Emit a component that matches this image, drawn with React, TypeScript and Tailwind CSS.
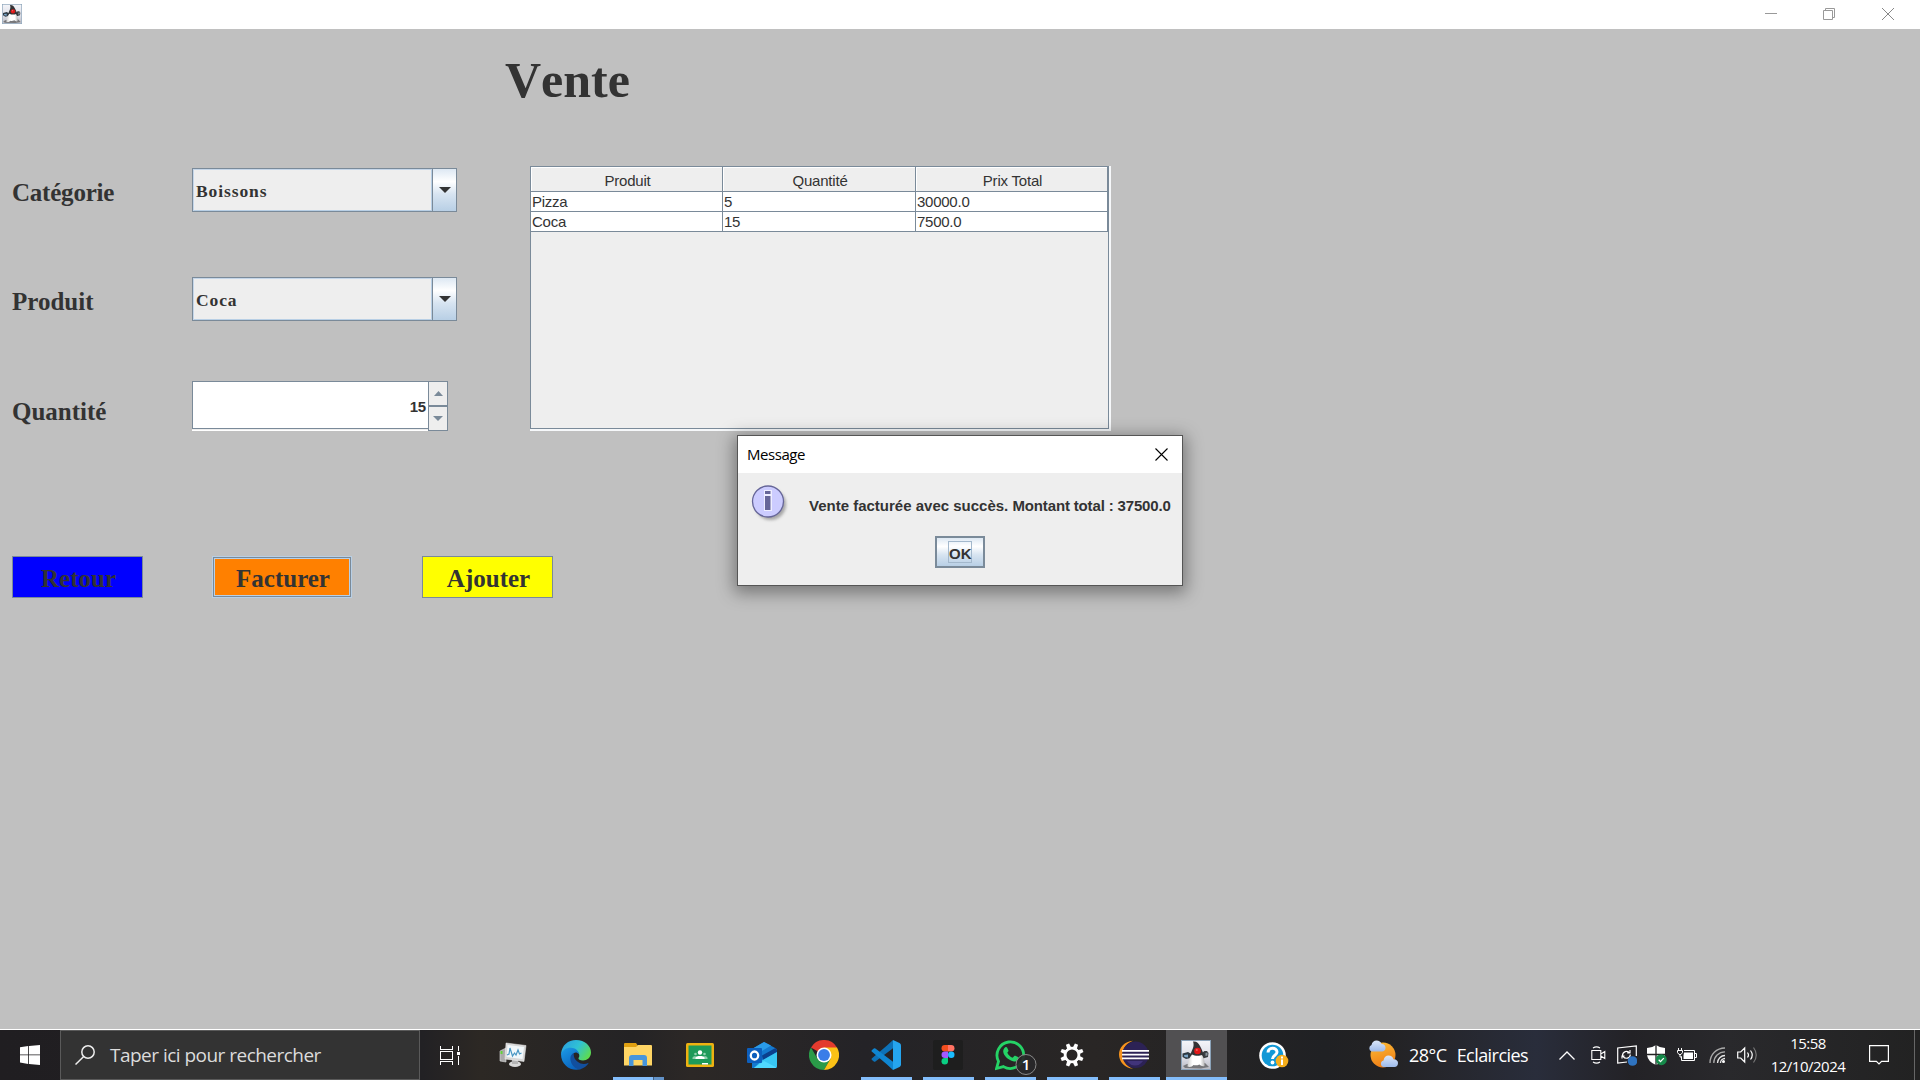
import type { ReactNode } from "react";

const SERIF = "font-['Liberation_Serif',serif]";
const SANS = "font-['Liberation_Sans',sans-serif]";
const UI = "font-['Open_Sans',sans-serif]";

function DukeIcon({ className }: { className: string }) {
  return (
    <svg viewBox="0 0 30 30" preserveAspectRatio="none" className={className}>
      <defs>
        <linearGradient id="dukeBg" x1="0" y1="0" x2="0" y2="1">
          <stop offset="0" stopColor="#f4f5f9" />
          <stop offset="0.6" stopColor="#dcdde6" />
          <stop offset="1" stopColor="#b9bac2" />
        </linearGradient>
        <linearGradient id="dukeBody" x1="0" y1="0" x2="1" y2="0">
          <stop offset="0" stopColor="#cfcfcf" />
          <stop offset="0.3" stopColor="#ffffff" />
          <stop offset="0.75" stopColor="#ffffff" />
          <stop offset="1" stopColor="#b5b5b5" />
        </linearGradient>
      </defs>
      <rect x="0.5" y="0.5" width="29" height="29" fill="url(#dukeBg)" stroke="#8ba3b9" />
      <path d="M6 24 L24 23 L28 27 L20 28.5 L4 28 L2 26 Z" fill="#77777a" />
      <path d="M1.5 13.500 L7 12 L10.500 14 L10 18 L5 19 L1.500 17 Z" fill="#2e3a44" />
      <path d="M3 15 L7 14.500 L7 17.500 L3.500 17 Z" fill="#7ba5c8" />
      <path d="M20 13.500 L23.500 11 L26 11 L27.500 13 L27 17 L22 18.500 Z" fill="#3a3e42" />
      <path d="M24.500 13 L26.500 12.500 L26.500 15.500 L24.500 16 Z" fill="#8a959d" />
      <path d="M12 1.500 C15.500 1 17.500 3 19 6 C21 9.500 22.500 13 23 18 L9 18 C9 13 12 9.500 12.500 6 C12.700 4 12.500 3 12 1.500 Z" fill="#333335" />
      <path d="M11 14.500 C13.500 16 18.500 16.200 21 15 C22.800 17.500 24 21.500 23.500 26 C21.500 26.500 20 26 18.500 24.500 C16 25.500 14 25.500 12.500 25 C11 27 8.500 27.500 6.500 26.500 C6.500 21.500 8.500 17.500 11 14.500 Z" fill="url(#dukeBody)" />
      <circle cx="16.500" cy="11" r="3.300" fill="#e01818" />
      <circle cx="15.800" cy="10" r="1" fill="#f46060" />
    </svg>
  );
}

function TitleBar() {
  return (
    <header className="flex h-[29px] items-center justify-between bg-white">
      <DukeIcon className="-mt-px ml-[2px] h-5 w-5" />
      <div className="flex items-center pr-[26px]">
        <svg viewBox="0 0 12 12" className="-mt-px h-3 w-3"><path d="M0 5.500h12" stroke="#999" /></svg>
        <svg viewBox="0 0 12 12" className="-mt-px ml-[46px] h-3 w-3" fill="none" stroke="#999">
          <path d="M.5 2.500h9v9h-9zM2.500 2.500v-2h9v9h-2" />
        </svg>
        <svg viewBox="0 0 12 12" className="-mt-px ml-[47px] h-3 w-3" stroke="#888"><path d="M0 0l12 12M12 0L0 12" /></svg>
      </div>
    </header>
  );
}

function ComboBox({ value }: { value: string }) {
  return (
    <div className="flex h-[44px] w-[265px] border border-[#7a8a99] bg-[#eee]">
      <div className="h-[42px] w-[239px] border-t border-l border-[#c5d6e9] bg-[#eee]">
        <div className={`${SERIF} h-[41px] border-r border-b border-[#b8cfe5] pt-[10px] pl-[2px] text-[17.500px] leading-[22px] font-bold tracking-[0.900px] text-[#333]`}>
          {value}
        </div>
      </div>
      <div className="flex flex-1 items-center justify-center border-l border-[#7a8a99] bg-[linear-gradient(180deg,#dde8f3_0%,#ffffff_30%,#d7e4f1_60%,#b8cfe5_100%)]">
        <svg viewBox="0 0 12 6" className="h-[6px] w-3"><path d="M0 0h12L6 6z" fill="#333" /></svg>
      </div>
    </div>
  );
}

function Spinner() {
  return (
    <div className="flex h-[50px] w-[256px]">
      <div className="h-[50px] w-[236px] border-b border-white">
        <div className={`${SANS} h-[48px] border-t border-b border-l border-[#7a8a99] bg-white pt-[16px] pr-[2px] text-right text-[15px] leading-[18px] font-bold tracking-[-0.200px] text-[#333]`}>
          15
        </div>
        <div className="h-px bg-[#eee]" />
      </div>
      <div className="flex w-5 flex-col border border-[#7a8a99] bg-[#eee]">
        <div className="flex h-[25px] items-center justify-center border-b-2 border-[#7a8a99]">
          <svg viewBox="0 0 9 5" className="h-[5px] w-[9px]"><path d="M0 5h9L4.500 0z" fill="#7a8a99" /></svg>
        </div>
        <div className="flex h-[23px] items-center justify-center">
          <svg viewBox="0 0 10 5" className="h-[5px] w-[10px]"><path d="M0 0h10L5 5z" fill="#7a8a99" /></svg>
        </div>
      </div>
    </div>
  );
}

function Field({ label, pad, children }: { label: string; pad: string; children: ReactNode }) {
  return (
    <div className="flex">
      <span className={`${SERIF} ${pad} w-[192px] pl-3 text-[25px] leading-[30px] font-bold text-[#333]`}>{label}</span>
      {children}
    </div>
  );
}

function SalesTable() {
  const heads = ["Produit", "Quantité", "Prix Total"];
  const rows = [
    ["Pizza", "5", "30000.0"],
    ["Coca", "15", "7500.0"],
  ];
  const grid = "grid grid-cols-[192px_193px_192px]";
  return (
    <div className="h-[265px] w-[581px] border-r-2 border-b-2 border-[#f6f8fa]">
      <div className={`${SANS} h-[263px] border border-[#7a8a99] bg-[#eee] text-[15px] text-[#333]`}>
        <div className={`${grid} h-[25px]`}>
          {heads.map((h) => (
            <div key={h} className="flex justify-center border-r border-b border-[#7a8a99] pt-[5px] pl-[2px] leading-[18px] tracking-[-0.200px] shadow-[inset_1px_1px_0_#fff]">
              {h}
            </div>
          ))}
        </div>
        {rows.map((r) => (
          <div key={r[0]} className={`${grid} h-5 bg-white`}>
            {r.map((c) => (
              <div key={c} className="border-r border-b border-[#7a8a99] pl-[1px] leading-[19px] tracking-[-0.250px]">{c}</div>
            ))}
          </div>
        ))}
      </div>
    </div>
  );
}

function MessageDialog() {
  return (
    <section className="absolute top-[435px] left-[737px] h-[151px] w-[446px] border border-[#555] bg-[#eee] shadow-[0_4px_16px_3px_rgba(0,0,0,0.38)]">
      <div className="flex h-[37px] items-center justify-between bg-white pr-[14px] pl-[9px]">
        <span className={`${UI} -mt-[2px] text-[15px] leading-5 tracking-[-0.450px] text-black`}>Message</span>
        <svg viewBox="0 0 13 13" className="-mt-px h-[13px] w-[13px]" stroke="#000" strokeWidth="1.100"><path d="M.5.5l12 12M12.500.5l-12 12" /></svg>
      </div>
      <div className="flex h-[52px] pl-[13px]">
        <svg viewBox="0 0 40 42" className="mt-[10px] h-[42px] w-[40px]">
          <defs><filter id="soft" x="-30%" y="-30%" width="160%" height="160%"><feGaussianBlur stdDeviation="1.500" /></filter></defs>
          <circle cx="19.500" cy="21.500" r="15.500" fill="#888" opacity=".7" filter="url(#soft)" />
          <circle cx="17" cy="18.500" r="15.500" fill="#ccf" stroke="#669" strokeWidth="1.300" />
          <path d="M13 7h8v21h-8z" fill="#eef" />
          <path d="M14 8h5.500v3h-5.500zM14 13h5.500v14h-5.500z" fill="#669" />
        </svg>
        <span className={`${SANS} mt-[24px] ml-[18px] text-[15px] leading-[18px] font-bold whitespace-nowrap text-[#333]`}>
          Vente facturée avec succès. <span className="tracking-[-0.150px]">Montant total : 37500.0</span>
        </span>
      </div>
      <button className={`${SANS} mt-[11px] ml-[197px] flex h-8 w-[50px] items-center justify-center border-2 border-[#7a8a99] bg-[linear-gradient(180deg,#dde8f3_0%,#ffffff_30%,#d7e4f1_60%,#b8cfe5_100%)]`}>
        <span className="h-[22px] w-6 border border-[#a3b8cc] pt-[3px] text-center text-[15px] leading-[18px] font-bold text-[#333]">OK</span>
      </button>
    </section>
  );
}

const EdgeIcon = () => (
  <svg viewBox="0 0 30 30" className="h-[30px] w-[30px]">
    <defs>
      <linearGradient id="edgeTop" x1="0" y1="0.2" x2="1" y2="0.7"><stop offset="0" stopColor="#2a9fe0" /><stop offset="0.5" stopColor="#30c2d4" /><stop offset="1" stopColor="#5fdc4a" /></linearGradient>
      <linearGradient id="edgeLow" x1="0" y1="0" x2="0.6" y2="1"><stop offset="0" stopColor="#1c9be6" /><stop offset="1" stopColor="#0a62bd" /></linearGradient>
    </defs>
    <path d="M0 14C1 5 7 0 15 0c9 0 15 6 15 12.500 0 5-4 8-8 8-3 0-5-1-4.500-2.500 1-1.500 1-2 .5-4C16.500 10 10 7 0 14z" fill="url(#edgeTop)" />
    <path d="M0 14C2 9.500 6 7.500 10 7.800c4 .2 7.500 2.500 8 6.200-1.500-1.500-3.500-2-5-1-4.500 3-1 12 7 16-9 3-20-3-20-15z" fill="url(#edgeLow)" />
    <path d="M13 13c-3 1-4 4-3.500 7C10.500 26 16 30.500 20 29c3-.8 6-3 7.800-6.200-4 1.800-8 1.500-10.800-.8-3-2.300-5-5-4-9z" fill="#124f9e" />
  </svg>
);

const ExplorerIcon = () => (
  <svg viewBox="0 0 28 24" className="h-6 w-7">
    <path d="M0 1a1 1 0 011-1h11l2 3-2 2H0z" fill="#e0a011" />
    <path d="M0 4h12l2-2h13a1 1 0 011 1v19.500H0z" fill="#fed565" />
    <path d="M5 23v-8a3 3 0 013-3h12a3 3 0 013 3v8h-4.500v-6h-9v6z" fill="#4795dc" />
  </svg>
);

const ClassroomIcon = () => (
  <svg viewBox="0 0 28 24" className="h-6 w-7">
    <rect width="28" height="24" rx="1.500" fill="#eeb211" />
    <rect x="2.500" y="2.500" width="23" height="19" fill="#1d9a59" />
    <circle cx="14" cy="9.500" r="2.200" fill="#fff" />
    <circle cx="9.500" cy="11" r="1.300" fill="#8fd0ae" />
    <circle cx="18.500" cy="11" r="1.300" fill="#8fd0ae" />
    <path d="M6.500 16v-1c0-2 3.500-2 5-1 1-1 4-1 5 0 1.500-1 5-1 5 1v1z" fill="#8fd0ae" />
    <path d="M9.500 16v-1c0-2.600 9-2.600 9 0v1z" fill="#fff" />
    <path d="M16 20h6v1.500h-6z" fill="#fff" />
  </svg>
);

const OutlookIcon = () => (
  <svg viewBox="0 0 30 26" className="h-[26px] w-[30px]">
    <path d="M5 7 L17 0 L29 6.500 L30 8 V24 Q30 26 28 26 H5 Z" fill="#1479cf" />
    <path d="M5 7 L17 0 L24 3.500 L10 12 L5 10 Z" fill="#2a9be8" />
    <path d="M15 13.500 L28.500 6 L30 8 V10 L16 18 Z" fill="#0b3f8d" />
    <path d="M15 18.500 L30 10 V24 Q30 26 28 26 H7 Z" fill="#38c6f4" />
    <path d="M7 26 L17 19 L29.500 25.500 L28 26 Z" fill="#50d9ff" />
    <rect y="6" width="15" height="15" rx="1" fill="#0d5fbd" />
    <ellipse cx="7.500" cy="13.500" rx="3.700" ry="4" fill="none" stroke="#fff" strokeWidth="2.300" />
  </svg>
);

const ChromeIcon = () => (
  <svg viewBox="0 0 48 48" className="h-[30px] w-[30px]">
    <path d="M24 24L3.200 12A24 24 0 0144.800 12z" fill="#e33b2e" />
    <path d="M3.200 12A24 24 0 0024 48l10.400-18H13.600z" fill="#2a9a48" />
    <path d="M24 12h20.800A24 24 0 0124 48l10.400-18z" fill="#fbc116" />
    <circle cx="24" cy="24" r="12" fill="#fff" />
    <circle cx="24" cy="24" r="9.500" fill="#3a7de8" />
  </svg>
);

const TaskManagerIcon = () => (
  <svg viewBox="0 0 28 26" className="mr-[2px] h-[26px] w-7">
    <path d="M1 9l6-3v14l-6-1z" fill="#aaa" stroke="#ddd" strokeWidth=".6" />
    <path d="M1.500 9h2v3h-2z" fill="#62d33a" />
    <ellipse cx="16" cy="22" rx="6" ry="3" fill="#d9d9d9" />
    <path d="M13 18h6v4h-6z" fill="#b5b5b5" />
    <path d="M7 1l20 2.500-2 16L6 17z" fill="#d7d7d7" stroke="#f1f1f1" strokeWidth=".5" />
    <path d="M8.500 3L25 5l-1.500 12L7.500 15z" fill="#f2f8fb" />
    <path d="M8 13l2-1 1-6 2.500 8 2-3 1.500 2 2-5 1.500 4 2-1" fill="none" stroke="#4997c4" strokeWidth="1.200" />
  </svg>
);

const VsCodeIcon = () => (
  <svg viewBox="0 0 30 30" className="h-[30px] w-[30px]">
    <path d="M22 0l-6 5.500L1 18.200a1.200 1.200 0 000 1.800L2.800 21.500a1.300 1.300 0 001.600 0L22 8.200z" fill="#0d72b8" />
    <path d="M22 30l-6-5.500L1 11.800A1.200 1.200 0 011 10l1.800-1.500a1.300 1.300 0 011.600 0L22 21.800z" fill="#0f86d2" />
    <path d="M22 0l6.500 3q1.500.8 1.500 2.500v19q0 1.700-1.500 2.500L22 30z" fill="#25a5ef" />
  </svg>
);

const FigmaIcon = () => (
  <svg viewBox="0 0 30 30" className="h-[30px] w-[30px]">
    <rect width="30" height="30" rx="2" fill="#1e1e1e" />
    <path d="M15 5h-3.200a3.250 3.250 0 000 6.500H15z" fill="#f24e1e" />
    <path d="M15 5h3.200a3.250 3.250 0 010 6.500H15z" fill="#ff7262" />
    <path d="M15 11.500h-3.200a3.250 3.250 0 000 6.500H15z" fill="#a259ff" />
    <circle cx="18.250" cy="14.750" r="3.250" fill="#1abcfe" />
    <path d="M11.750 18H15v3.250A3.250 3.250 0 1111.750 18z" fill="#0acf83" />
  </svg>
);

const WhatsAppIcon = () => (
  <svg viewBox="0 0 42 36" className="mt-[5px] ml-[12px] h-9 w-[42px]">
    <path d="M1.500 28.500l2-7.200A13.300 13.300 0 118.500 26.600z" fill="none" stroke="#25d366" strokeWidth="2.800" />
    <path d="M10 7.500c1-.7 1.700-.6 2.200.3l1.300 2.800c.2.700-.8 1.700-1.200 2.200 1.200 2.400 3 4 5.300 5l1.700-1.900c.5-.5 1-.2 1.500 0l2.700 1.400c.7.500.2 2.200-.5 3-1.300 1.300-3 1.500-5 .9-5.500-1.700-9.500-6-9.800-9.800 0-1.600.7-3 1.800-3.900z" fill="#25d366" />
    <circle cx="31" cy="24.500" r="10" fill="#29282a" fillOpacity=".93" stroke="#888" strokeWidth="1" />
    <text x="31" y="30" textAnchor="middle" fontFamily="Open Sans, sans-serif" fontSize="15" fontWeight="600" fill="#fff">1</text>
  </svg>
);

const GearIcon = () => (
  <svg viewBox="0 0 24 24" className="h-6 w-6">
    <circle cx="12" cy="12" r="6.900" fill="none" stroke="#fff" strokeWidth="2.800" />
    {[22.5, 67.5, 112.5, 157.5, 202.5, 247.5, 292.5, 337.5].map((a) => (
      <path key={a} d="M9.800 5L10.300.3h3.400L14.200 5z" fill="#fff" transform={`rotate(${a} 12 12)`} />
    ))}
  </svg>
);

const EclipseIcon = () => (
  <svg viewBox="0 0 30 30" className="h-[30px] w-[30px]">
    <path d="M14 .8C5.500 1.500 0 7.500 0 14.500S5.500 28 14 28.700C8 26.500 3.500 21 3.500 14.500S8 3 14 .8z" fill="#f7941e" />
    <circle cx="16.500" cy="14.800" r="13.200" fill="#2c2255" />
    <path d="M8 21h16a9.500 9.500 0 01-16 0z" fill="#41347a" />
    <path d="M3 10.800h27M3 14.600h27M3 18.400h27" stroke="#fff" strokeWidth="1.700" />
  </svg>
);

const HelpIcon = () => (
  <svg viewBox="0 0 30 28" className="h-7 w-[30px]">
    <circle cx="13.500" cy="13.500" r="13.300" fill="#fff" />
    <circle cx="13.500" cy="13.500" r="10.800" fill="#1198d6" />
    <path d="M9 10.500c0-5.500 9-5.500 9-.5 0 3.500-4.500 3-4.500 7" fill="none" stroke="#fff" strokeWidth="3" />
    <circle cx="13.500" cy="20.500" r="1.900" fill="#fff" />
    <circle cx="23" cy="19" r="6.300" fill="#f5ae1c" />
    <path d="M22 17.500h2v5.500h-2zM22 14.500h2v2h-2z" fill="#fff" />
  </svg>
);

const WeatherIcon = () => (
  <svg viewBox="0 0 30 30" className="-ml-px h-[30px] w-[30px]">
    <defs>
      <linearGradient id="sun" x1="0.200" y1="0" x2="0.500" y2="1"><stop offset="0" stopColor="#fcbb36" /><stop offset="1" stopColor="#ef7d16" /></linearGradient>
      <linearGradient id="cloud" x1="0" y1="0" x2="0" y2="1"><stop offset="0" stopColor="#dbe7fa" /><stop offset="1" stopColor="#9dbaea" /></linearGradient>
    </defs>
    <circle cx="15" cy="15" r="12.500" fill="url(#sun)" />
    <path d="M3.500 11.500a3.500 3.500 0 010-6.500C4 2 6 .5 8.500.5S13 2 13.500 4c3 0 4 2 4 3.800 0 2.500-1.500 3.700-3.500 3.700z" fill="url(#cloud)" />
    <path d="M16 27a3.300 3.300 0 01-.5-6.500c.5-3.500 2.500-5 5-5s4.500 1.500 5 3.800c3 0 4.500 1.800 4.500 3.800 0 2.600-1.500 3.900-3.500 3.900z" fill="url(#cloud)" />
  </svg>
);

type App = { name: string; icon: ReactNode; open?: boolean; active?: boolean; stacked?: boolean };

const apps: App[] = [
  { name: "task-manager", icon: <TaskManagerIcon /> },
  { name: "edge", icon: <EdgeIcon /> },
  { name: "explorer", icon: <ExplorerIcon />, open: true, stacked: true },
  { name: "classroom", icon: <ClassroomIcon /> },
  { name: "outlook", icon: <OutlookIcon /> },
  { name: "chrome", icon: <ChromeIcon /> },
  { name: "vscode", icon: <VsCodeIcon />, open: true },
  { name: "figma", icon: <FigmaIcon />, open: true },
  { name: "whatsapp", icon: <WhatsAppIcon />, open: true },
  { name: "settings", icon: <GearIcon />, open: true },
  { name: "eclipse", icon: <EclipseIcon />, open: true },
  { name: "java", icon: <DukeIcon className="mr-px h-[30px] w-[30px]" />, open: true, active: true },
];

function TaskbarApp({ app }: { app: App }) {
  return (
    <div className={app.active ? "ml-px flex h-[50px] w-[61px] flex-col items-center bg-[#515052]" : "flex h-[50px] w-[62px] flex-col items-center"}>
      <div className="flex h-[47px] items-center pt-[3px]">{app.icon}</div>
      {app.open && (
        <div className={app.active ? "h-[3px] w-full bg-[#83bdfb]" : "ml-[6px] flex h-[3px] w-[51px] self-start bg-[#83bdfb]"}>
          {app.stacked && <div className="ml-auto h-[3px] w-[11px] border-l border-[#45607f] bg-[#6292c8]" />}
        </div>
      )}
    </div>
  );
}

function Taskbar() {
  return (
    <footer className="flex h-[51px] border-t border-white bg-[linear-gradient(90deg,#201e21_0%,#222124_22%,#2c2824_25%,#242325_33%,#2c2826_36%,#242327_45%,#292625_57%,#202124_69%,#232223_72%,#292d3b_80%,#232226_85%,#29292c_90%,#222_100%)]">
      <div className="flex w-[60px] items-center justify-center">
        <svg viewBox="0 0 20 20" className="h-5 w-5" fill="#fff"><path d="M0 2.300L8.200 1v8.500H0zM9 .9L20 0v9.500H9zM0 10.300h8.200V19L0 17.600zM9 10.300h11V20L9 19z" /></svg>
      </div>
      <div className="flex w-[360px] items-center border border-[#5a5a5a] bg-[#333]">
        <svg viewBox="0 0 20 20" className="ml-[14px] h-5 w-5" fill="none" stroke="#eee" strokeWidth="1.500"><circle cx="13" cy="7" r="6.200" /><path d="M8.700 11.500L.5 19.500" /></svg>
        <span className={`${UI} ml-[15px] text-[19px] tracking-[-0.520px] whitespace-nowrap text-[#dcdcdc]`}>Taper ici pour rechercher</span>
      </div>
      <div className="flex w-[63px] items-center pl-5">
        <svg viewBox="0 0 20 19" className="h-[19px] w-5" fill="none" stroke="#fff" shapeRendering="crispEdges">
          <path d="M.5 5.500h12v8H.5zM.5 0v3.500h12V0M.5 19v-3.500h12V19M18.500 0v5M18.500 10v9" />
          <path d="M17 6h3v3h-3z" fill="#fff" stroke="none" />
        </svg>
      </div>
      <div className="flex">
        {apps.map((a) => <TaskbarApp key={a.name} app={a} />)}
      </div>
      <div className="ml-[32px] flex items-center pt-[2px]"><HelpIcon /></div>
      <div className="ml-[80px] flex w-[180px] items-center">
        <WeatherIcon />
        <span className={`${UI} ml-[11px] text-[18px] tracking-[-0.500px] text-white`}>28°C</span>
        <span className={`${UI} ml-[10px] text-[18px] tracking-[-0.550px] text-white`}>Eclaircies</span>
      </div>
      <div className="flex flex-1 items-center">
        <svg viewBox="0 0 16 9" className="ml-[10px] h-[9px] w-4" fill="none" stroke="#fff" strokeWidth="1.300"><path d="M.5 8.500L8 1l7.500 7.500" /></svg>
        <svg viewBox="0 0 15 18" className="ml-[16px] h-[18px] w-[15px]" fill="none" stroke="#fff" strokeWidth="1.100">
          <path d="M.8 4.500h9v9h-9zM9.800 8l4-2.500v7l-4-2.500M2 2Q5.500-.3 9 2M2 16q3.500 2.300 7 0" />
        </svg>
        <svg viewBox="0 0 20 21" className="ml-[11px] h-[21px] w-5" fill="none" stroke="#fff" strokeWidth="1.200">
          <path d="M10 17l-9.300 1V3L19.300 1v10M5 13.500v-2.500h2.500M5.500 10.500c0-4 5-5.500 7-2.500M13 5v2.800h-2.800M13.300 9.500c0 4-5 5-7.300 1.800" />
          <circle cx="15.500" cy="16" r="4.800" fill="#2f73c0" stroke="none" />
        </svg>
        <svg viewBox="0 0 20 21" className="ml-[10px] h-[21px] w-5">
          <path d="M0 3q5 0 9-3 4 3 9 3v7q-1 7-9 10Q1 17 0 10z" fill="#fff" />
          <path d="M9 0v20M0 9.500h18" stroke="#222" strokeWidth="1.300" />
          <circle cx="14.300" cy="14.700" r="5.500" fill="#16894a" />
          <path d="M11.700 14.800l1.800 1.800 3.300-3.500" fill="none" stroke="#fff" strokeWidth="1.300" />
        </svg>
        <svg viewBox="0 0 20 15" className="ml-[10px] h-[15px] w-5" fill="none" stroke="#fff">
          <path d="M7 2.500h10.500v10h-13V8.500M17.500 5.500h2v4h-2" />
          <path d="M7 4.500h9v6.500H6.500V7.500z" fill="#fff" stroke="none" />
          <path d="M1.500 0v2M4.500 0v2M.5 2.500h5v2L4 6.500H2L.5 4.500zM3 6.500v2.500h2" />
        </svg>
        <svg viewBox="0 0 17 17" className="ml-[12px] h-[17px] w-[17px]" fill="none" stroke="#aaa" strokeWidth="1.300">
          <path d="M1 16C1 7.500 7.500 1 16 1M4.800 16C4.800 9.800 9.800 4.800 16 4.800" />
          <path d="M8.500 16c0-4 3.500-7.500 7.500-7.500M11.500 16c0-2.500 2-4.500 4.500-4.500" stroke="#e8e8e8" />
          <circle cx="14.500" cy="14.500" r="1.500" fill="#fff" stroke="none" />
        </svg>
        <svg viewBox="0 0 21 18" className="ml-[11px] h-[18px] w-[21px]" fill="none" stroke="#fff" strokeWidth="1.200">
          <path d="M.7 6h3l4-4v14l-4-4h-3zM10.500 6.500q2 2.500 0 5M13.500 4.500q3.500 4.500 0 9" />
          <path d="M16.500 1.500q5.500 7.500 0 15" stroke="#777" />
        </svg>
        <div className={`${UI} ml-[5px] flex w-[90px] flex-col items-center text-[15px] leading-[23px] text-white`}>
          <span className="tracking-[-0.550px]">15:58</span>
          <span className="tracking-[-0.500px]">12/10/2024</span>
        </div>
        <svg viewBox="0 0 20 20" className="ml-[16px] h-5 w-5" fill="none" stroke="#fff" strokeWidth="1.200"><path d="M.6.6h18.800v15.800h-6.800l-2.600 2.500-2.600-2.500H.6z" /></svg>
        <div className="mr-[5px] ml-auto h-[50px] w-px bg-[#666]" />
      </div>
    </footer>
  );
}

export default function App() {
  const action = `${SERIF} flex items-center justify-center text-[25px] leading-[30px] font-bold text-[#333] pt-[3px] pl-[2px] border border-[#7a8a99]`;
  return (
    <div className="relative flex h-[1080px] w-[1920px] flex-col overflow-hidden bg-[#c0c0c0]">
      <TitleBar />
      <main className="h-[1000px]">
        <h1 className={`${SERIF} h-[137px] pt-[26px] pl-[505px] text-[50px] leading-[50px] font-bold text-[#333] [font-kerning:none]`}>Vente</h1>
        <div className="flex">
          <div className="w-[530px] pt-[2px]">
            <Field label="Catégorie" pad="pt-[10px] tracking-[-0.220px]"><ComboBox value="Boissons" /></Field>
            <div className="mt-[65px]"><Field label="Produit" pad="pt-[10px]"><ComboBox value="Coca" /></Field></div>
            <div className="mt-[60px]"><Field label="Quantité" pad="pt-[16px]"><Spinner /></Field></div>
          </div>
          <SalesTable />
        </div>
        <div className="mt-[125px] flex pl-3">
          <button className={`${action} h-[42px] w-[131px] bg-[#0000ff]`}>Retour</button>
          <div className="ml-[69px] h-[42px] w-[140px] border border-[#b8cfe5]">
            <button className={`${action} h-[40px] w-[138px] bg-[#ff8000] shadow-[inset_0_0_0_1px_#b8cfe5]`}>Facturer</button>
          </div>
          <button className={`${action} ml-[70px] h-[42px] w-[131px] bg-[#ffff00]`}>Ajouter</button>
        </div>
      </main>
      <Taskbar />
      <MessageDialog />
    </div>
  );
}
